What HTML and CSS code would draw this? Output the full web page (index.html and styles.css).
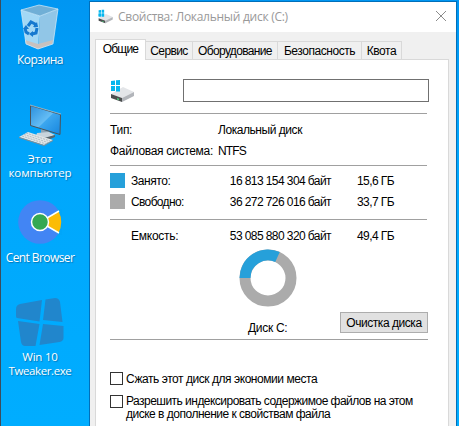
FILE: index.html
```html
<!DOCTYPE html>
<html lang="ru">
<head>
<meta charset="utf-8">
<title>Свойства: Локальный диск (C:)</title>
<link rel="stylesheet" href="styles.css">
</head>
<body>
<svg class="defs" width="0" height="0">
  <symbol id="drive" viewBox="0 0 26 24">
    <path fill="#05b6ee" d="M1 2l4-.6V6H1zM6 1.2L10 1v5H6zM1 7h4v5H1zM6 7h4v5.500H6z"/>
    <path fill="#e3e5e8" d="M1 15l12-7 11 5-12 6z"/>
    <path fill="#4b4e4f" d="M1 15l11 4v4L1 19z"/>
    <path fill="#b2b5ba" d="M12 19l12-6v4l-12 6z"/>
    <path fill="#45d078" d="M7 19l2 .7v1.500l-2-.7z"/>
    <path fill="#05b6ee" d="M1 7h4v5H1zM6 7h4v5.500H6z"/>
  </symbol>
</svg>
<div class="screen">
  <aside class="desktop">
    <div class="item bin">
      <svg width="40" height="46" viewBox="0 0 40 46">
        <path fill="#b5dff5" fill-opacity=".9" d="M1 6l19 6-2 33-12-5z"/>
        <path fill="#91c6e7" d="M20 12l18-7-5 35-15 5z"/>
        <path fill="#70afd6" d="M1 6L19 1l19 4-18 7z"/>
        <path fill="#c8c1bf" d="M5 36l13 4 15-4-1 4-14 5-12-5z"/>
        <path fill="none" stroke="#d8edf8" stroke-width=".7" d="M1 6L19 1l19 4-18 7zM1 6l5 34 12 5 15-5 5-35"/>
        <path fill="none" stroke="#1679cf" stroke-width="3" d="M8 22l3-4 4 2 1 3M17 24l-1 5-4 1M9 30l-3-2-1-4"/>
        <path fill="#1679cf" d="M13 23h5l-1-5zM13 27v6l-4-3zM3 25l3-4 3 4z"/>
      </svg>
      <span class="bin-text">Корзина</span>
    </div>
    <div class="item pc">
      <svg width="44" height="44" viewBox="0 0 44 44">
        <defs><linearGradient id="scr" x2="1" y2="1"><stop stop-color="#2a8fdc"/><stop offset=".5" stop-color="#65bdf5"/><stop offset=".52" stop-color="#3ca7ef"/><stop offset="1" stop-color="#1686df"/></linearGradient></defs>
        <path fill="#8fa4b3" d="M23 25l8 2-1 5h-7z"/>
        <path fill="#c8d4dc" d="M19 29l12-1 6 3-11 4-8-3z"/>
        <path fill="#59656c" d="M37 31v2l-10 4-9-4v-2l8 3z"/>
        <path fill="url(#scr)" stroke="#4b5359" d="M12.500 1.500l30 9-.5 20-29.500-9z"/>
        <path fill="none" stroke="#b9cbd5" stroke-width=".7" d="M12 1l31 9"/>
        <path fill="#e1e5e7" d="M1 33l9-5 25 8-9 5z"/>
        <path fill="#858d91" d="M1 33l25 8 9-5v1l-9 5L1 34z"/>
        <path stroke="#9caab2" stroke-width=".7" stroke-dasharray="2 1" d="M4 32l24 8M6 30.500l24 8M8 29l24 8"/>
      </svg>
      <span class="pc-text"><span class="pc1">Этот</span><span class="pc2">компьютер</span></span>
    </div>
    <div class="item cent">
      <svg width="44" height="44" viewBox="0 0 44 44">
        <circle cx="22" cy="22" r="21.800" fill="#4285f4"/>
        <path fill="#00a6fa" d="M22 22L42 9h2v26h-2z"/>
        <path fill="#fbbc05" d="M22 22l18.500-11q5.500 11 0 22z"/>
        <path fill="none" stroke="#fff" stroke-width="1.500" d="M41 11L22 22l19 11"/>
        <circle cx="22" cy="22" r="8.500" fill="#34a853" stroke="#fff" stroke-width="1.500"/>
      </svg>
      <span class="cent-text">Cent Browser</span>
    </div>
    <div class="item tweaker">
      <svg width="48" height="48" viewBox="0 0 48 48" fill="#2186cc">
        <path d="M4 6l22-4-2.500 21.500L1 20Q0 20 0 18V11q0-4 4-5zM29.500 1.500L39 0q4 0 5 4l2.500 20-19.500-2zM2 23l21.500 3-4 22H9q-3 0-4-4zM27 26l20.500 2V40q0 3-4 4L23.500 47z"/>
      </svg>
      <span class="tweaker-text"><span class="tw1">Win 10</span><span class="tw2">Tweaker.exe</span></span>
    </div>
  </aside>
  <main class="window">
    <header class="titlebar">
      <svg class="title-icon" width="16" height="15"><use href="#drive"/></svg>
      <span class="title">Свойства: Локальный диск (C:)</span>
      <svg class="close" width="12" height="12" viewBox="0 0 12 12"><path d="M1 1l10 10M11 1L1 11" fill="none" stroke="#8b8b8b"/></svg>
    </header>
    <nav class="tabs">
      <span class="tab active t1">Общие</span><span class="tab t2">Сервис</span><span class="tab t3">Оборудование</span><span class="tab t4">Безопасность</span><span class="tab t5">Квота</span>
    </nav>
    <section class="panel">
      <div class="name-row">
        <svg width="26" height="24"><use href="#drive"/></svg>
        <input class="name" type="text" aria-label="Метка">
      </div>
      <div class="info">
        <div class="row"><span class="type-label">Тип:</span><span class="type-value">Локальный диск</span></div>
        <div class="row"><span class="fs-label">Файловая система:</span><span class="fs-value">NTFS</span></div>
      </div>
      <div class="usage">
        <div class="stat"><i class="swatch used"></i><span class="used-label">Занято:</span><span class="bytes">16 813 154 304 байт</span><span class="gb">15,6 ГБ</span></div>
        <div class="stat"><i class="swatch free"></i><span class="free-label">Свободно:</span><span class="bytes">36 272 726 016 байт</span><span class="gb">33,7 ГБ</span></div>
      </div>
      <div class="capacity">
        <div class="stat"><i></i><span class="cap-label">Емкость:</span><span class="bytes">53 085 880 320 байт</span><span class="gb">49,4 ГБ</span></div>
      </div>
      <div class="chart">
        <svg width="58" height="58" viewBox="-29 -29 58 58" fill="none" stroke-width="11">
          <circle r="23" stroke="#ababab"/><path stroke="#26a0da" d="M-23 0A23 23 0 0 1 9.500 -20.950"/>
        </svg>
      </div>
      <div class="actions"><span class="disk">Диск C:</span><button>Очистка диска</button></div>
      <div class="options">
        <label><i class="box"></i><span class="compress">Сжать этот диск для экономии места</span></label>
        <label><i class="box"></i><span class="index"><span class="index1">Разрешить индексировать содержимое файлов на этом</span><br><span class="index2">диске в дополнение к свойствам файла</span></span></label>
      </div>
    </section>
  </main>
</div>
</body>
</html>
```
FILE: styles.css
```css
* { box-sizing: border-box; }
body { margin: 0; overflow: hidden; background: #00a5fa; }
.defs { display: block; }
.screen { display: flex; width: 459px; height: 426px; padding-top: 1px; border-left: 1px solid #3c4d5c; background: linear-gradient(#0096f2, #00a7fc 40%, #00adff); }
.desktop { width: 88px; flex: none; color: #fff; font: 12px/17px "Open Sans", sans-serif; text-align: center; }
.item { display: flex; flex-direction: column; align-items: center; width: 78px; text-shadow: 1px 1px 1px #00558999; white-space: nowrap; }
.item svg { flex: none; }
.bin { height: 103px; padding-top: 3px; }
.bin-text { margin-top: 1px; letter-spacing: -.5px; }
.pc { height: 96px; }
.pc-text, .tweaker-text { display: grid; grid-auto-rows: 14px; line-height: 14px; font-size: 11.5px; }
.pc-text { margin-top: 4px; }
.pc2 { letter-spacing: -.05px; }
.cent { height: 98px; }
.cent-text { margin-top: 5px; letter-spacing: -.58px; }
.tweaker-text { margin-top: 4px; }
.tw1 { letter-spacing: -.2px; }
.tw2 { letter-spacing: -.4px; }
.window { width: 368px; flex: none; height: 425px; display: flex; flex-direction: column; border: solid #006fba; border-width: 1px 1px 0; background: #f0f0f0; color: #000; font: 12px/14px "Liberation Sans", sans-serif; letter-spacing: -.45px; white-space: nowrap; }
.titlebar { display: flex; align-items: center; height: 30px; background: #fff; padding: 0 9px 2px 8px; color: #999; font: 12px "Open Sans", sans-serif; letter-spacing: -.28px; }
.title { margin-left: 4px; }
.close { margin-left: auto; }
.tabs { display: flex; align-items: flex-end; height: 28px; padding-left: 5px; z-index: 1; }
.tab { height: 19px; border: 1px solid #d9d9d9; border-width: 1px 1px 1px 0; text-align: center; line-height: 19px; }
.active { height: 21px; border-width: 1px 1px 0; background: #fff; }
.t1 { width: 51px; letter-spacing: -.8px; }
.t2 { width: 47px; letter-spacing: -.6px; }
.t3 { width: 85px; letter-spacing: -.65px; }
.t4 { width: 84px; }
.t5 { width: 40px; }
.panel { margin: -1px 7px 0 5px; height: 367px; padding: 19px 20px 0 14px; border: solid #d9d9d9; border-width: 1px 1px 0; background: #fff; }
.name-row { display: flex; justify-content: space-between; height: 34px; margin-right: -1px; }
.name { width: 246px; height: 23px; border: 1px solid #707070; background: #fff; padding: 2px; }
.info, .usage, .capacity { border-top: 1px solid #a0a0a0; width: 317px; }
.info { height: 52px; padding-top: 6px; }
.row { display: flex; height: 21px; line-height: 21px; }
.row span:first-child { width: 108px; letter-spacing: -.3px; }
.fs-value { letter-spacing: -.9px; }
.usage { height: 54px; padding-top: 5px; }
.stat { display: grid; grid-template-columns: 21px 71px 129px 63px; height: 21px; line-height: 20px; }
.swatch { width: 15px; height: 15px; margin-top: 2px; }
.used { background: #26a0da; }
.free { background: #ababab; }
.free-label { letter-spacing: -.65px; }
.cap-label { letter-spacing: -.25px; }
.bytes, .gb { text-align: right; letter-spacing: -.58px; }
.capacity { height: 30px; padding-top: 6px; }
.chart { height: 63px; padding-left: 129px; }
.chart svg { display: block; }
.actions { display: flex; justify-content: space-between; align-items: flex-start; width: 318px; height: 28px; padding-left: 138px; border-bottom: 1px solid #a0a0a0; }
.disk { margin-top: 9px; letter-spacing: -.3px; }
button { width: 88px; height: 21px; padding: 0; border: 1px solid #adadad; background: #e1e1e1; font: inherit; letter-spacing: -.45px; }
.options { padding-top: 32px; }
label { display: flex; height: 23px; }
.box { width: 13px; height: 13px; border: 1px solid #333; margin-right: 3px; flex: none; }
.index { line-height: 13px; }
.index1 { letter-spacing: -.53px; }
.index2 { letter-spacing: -.5px; }
```
